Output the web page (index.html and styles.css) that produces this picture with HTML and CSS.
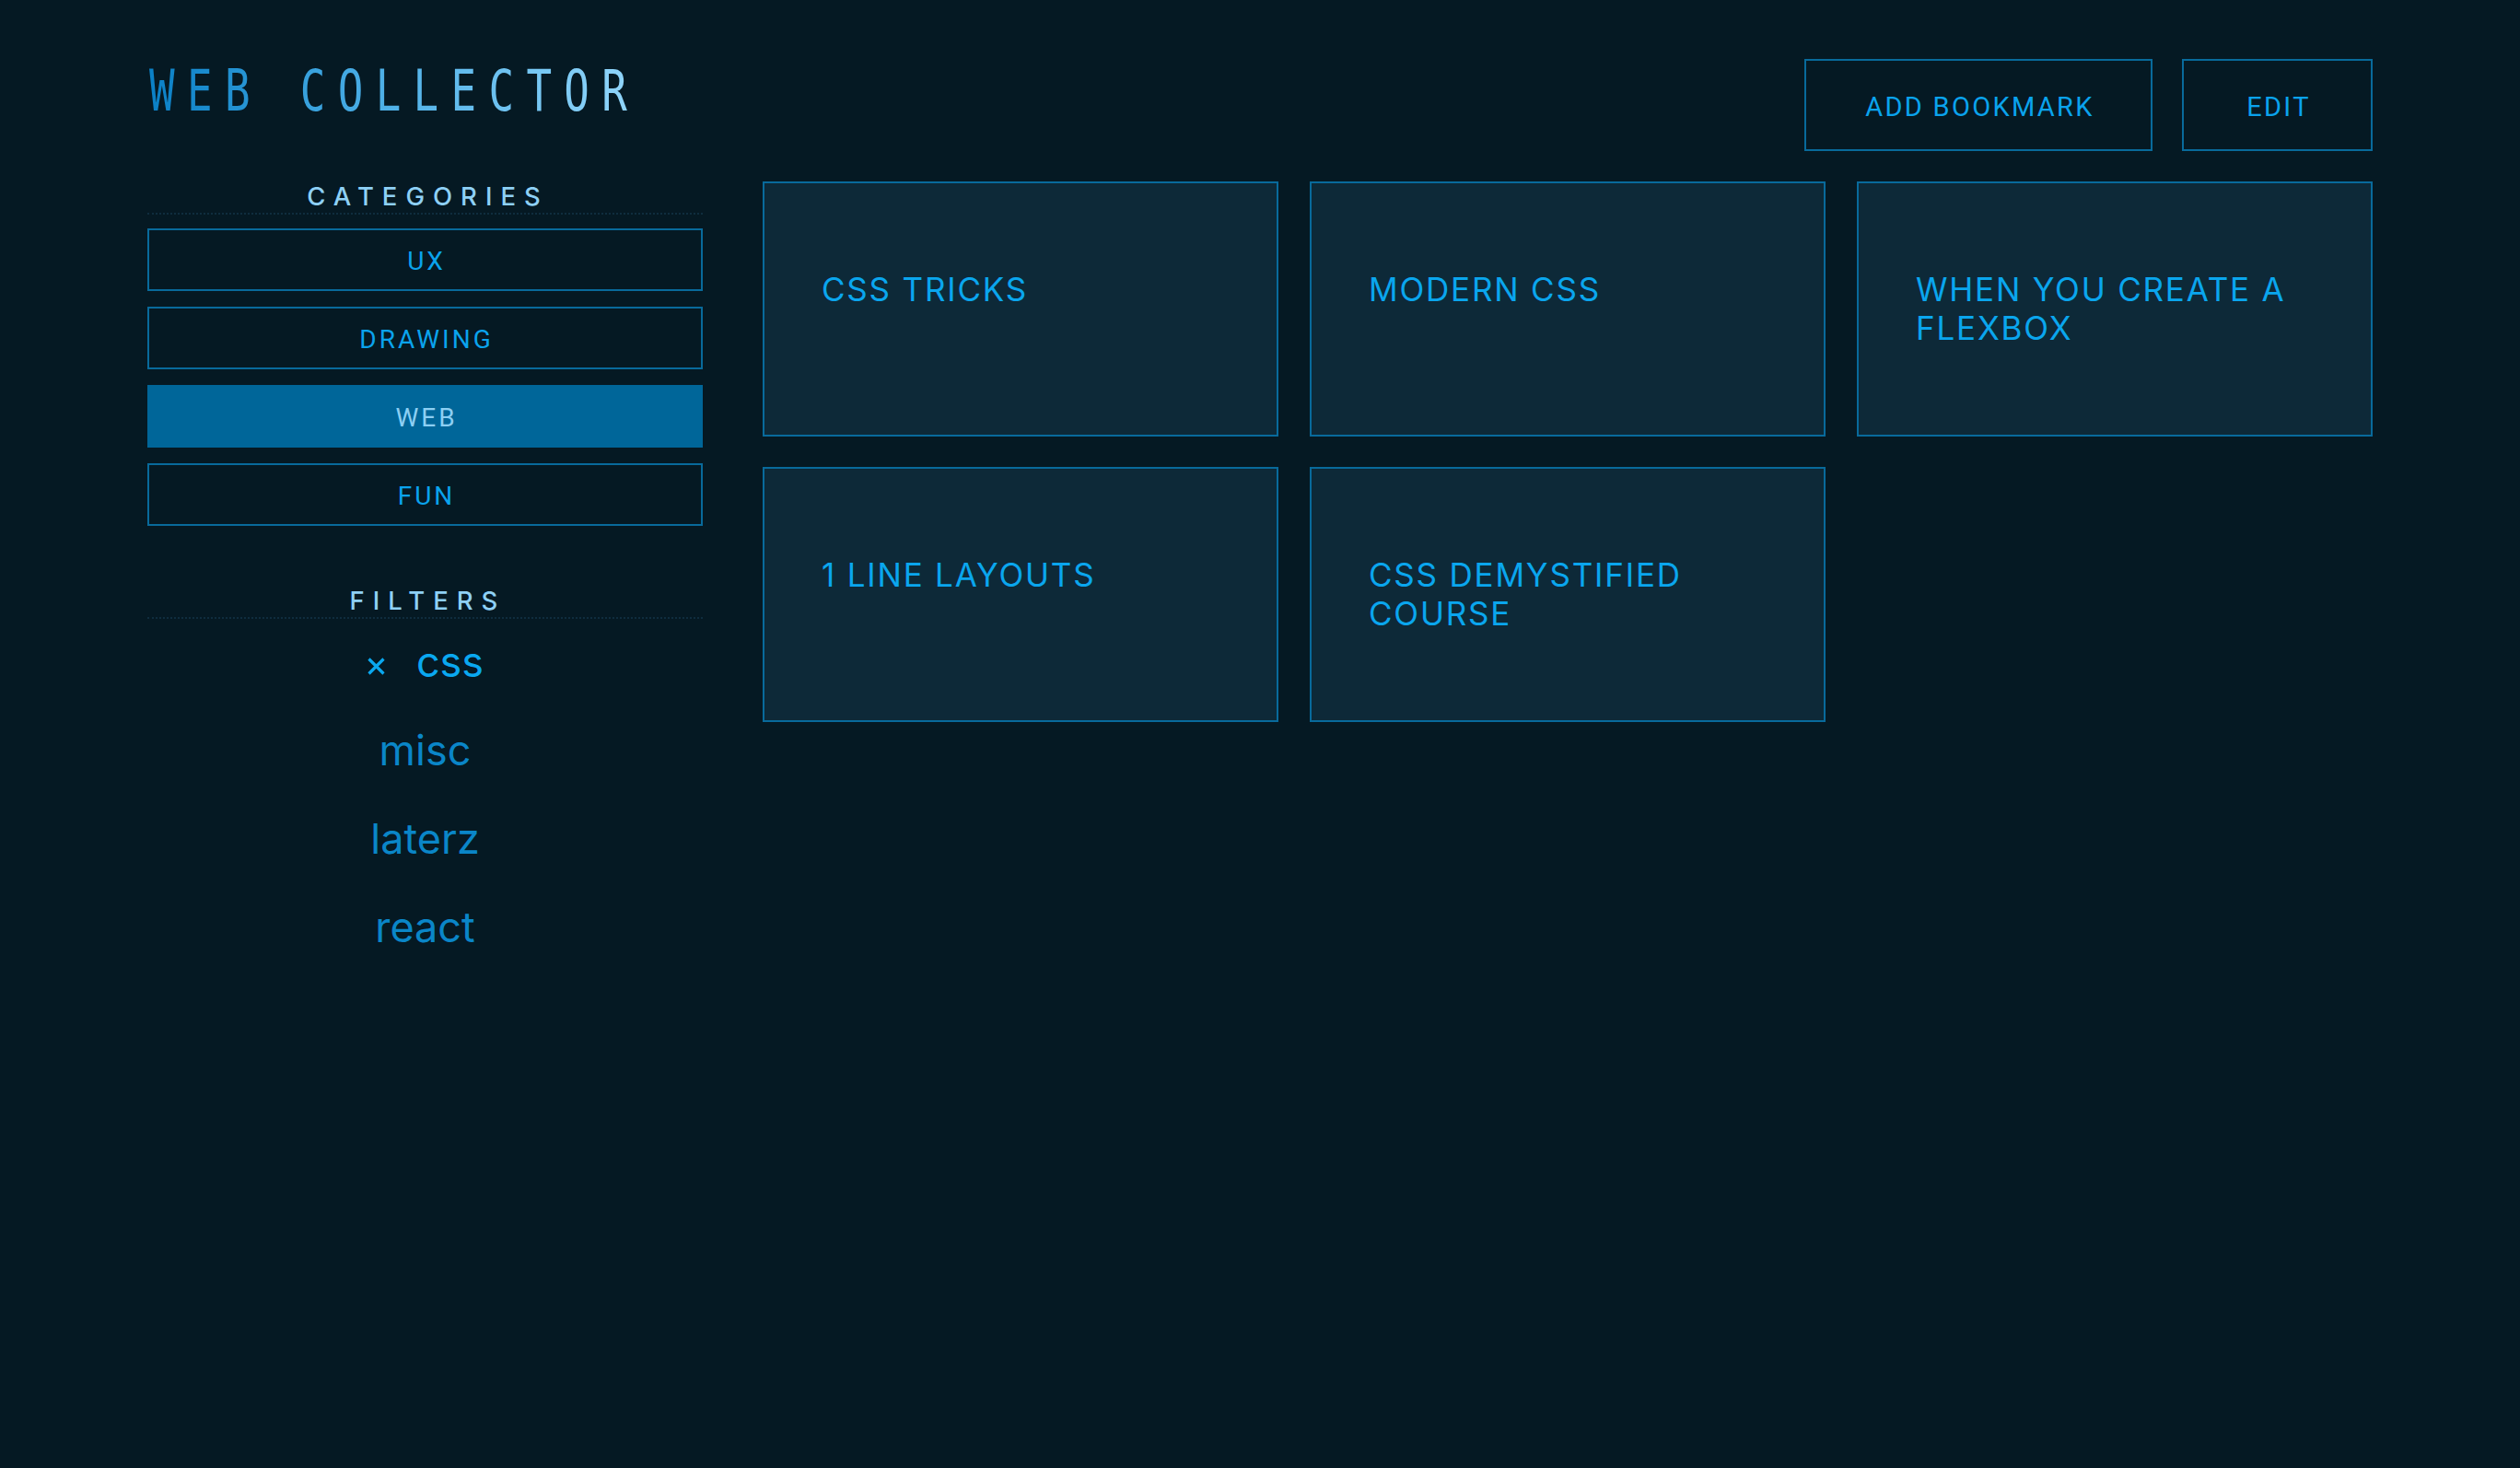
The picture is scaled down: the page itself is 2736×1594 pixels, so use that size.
FILE: index.html
```html
<!DOCTYPE html>
<html lang="en">
<head>
<meta charset="utf-8">
<title>Web Collector</title>
<link rel="stylesheet" href="styles.css">
</head>
<body>
<div class="page">
  <header class="topbar">
    <h1 class="logo">WEB COLLECTOR</h1>
    <div class="actions">
      <button class="btn btn-add">ADD BOOKMARK</button>
      <button class="btn btn-edit">EDIT</button>
    </div>
  </header>
  <main class="main">
    <aside class="sidebar">
      <h2 class="side-title">CATEGORIES</h2>
      <ul class="cat-list">
        <li class="cat">UX</li>
        <li class="cat">DRAWING</li>
        <li class="cat active">WEB</li>
        <li class="cat">FUN</li>
      </ul>
      <h2 class="side-title filters-title">FILTERS</h2>
      <ul class="filter-list">
        <li class="filter active"><svg class="x-icon" width="21" height="21" viewBox="0 0 21 21"><path d="M2.5 2.5 L18.5 18.5 M18.5 2.5 L2.5 18.5" stroke="#0aa8f0" stroke-width="3.2" fill="none"/></svg><span>css</span></li>
        <li class="filter">misc</li>
        <li class="filter">laterz</li>
        <li class="filter">react</li>
      </ul>
    </aside>
    <section class="grid">
      <div class="card">CSS TRICKS</div>
      <div class="card">MODERN CSS</div>
      <div class="card">WHEN YOU CREATE A FLEXBOX</div>
      <div class="card">1 LINE LAYOUTS</div>
      <div class="card">CSS DEMYSTIFIED COURSE</div>
    </section>
  </main>
</div>
</body>
</html>
```
FILE: styles.css
```css
html, body {
  margin: 0;
  background: #051923;
}
body {
  min-height: 100vh;
  font-family: Inter, "Noto Sans", sans-serif;
}
.page {
  padding: 64px 160px 0;
}
.topbar {
  display: flex;
  justify-content: space-between;
  align-items: flex-start;
}
.logo {
  margin: 4px 0 0 2px;
  font-family: "DejaVu Sans Mono", monospace;
  font-weight: normal;
  font-size: 62px;
  line-height: 62px;
  letter-spacing: 18px;
  white-space: nowrap;
  transform: scaleX(0.74);
  transform-origin: left top;
  background: linear-gradient(90deg, #0a80c6 0%, #4aaee6 45%, #92d6fb 100%);
  -webkit-background-clip: text;
  background-clip: text;
  color: transparent;
}
.actions {
  display: flex;
  gap: 32px;
}
.btn {
  height: 100px;
  box-sizing: border-box;
  padding: 3px 0 0 3px;
  border: 2px solid #086a9b;
  background: transparent;
  color: #0aa3ed;
  font-family: Roboto, "Liberation Sans", sans-serif;
  font-size: 29px;
  letter-spacing: 2.3px;
  display: flex;
  align-items: center;
  justify-content: center;
  cursor: pointer;
}
.btn-add {
  width: 378px;
}
.btn-edit {
  width: 207px;
}
.main {
  display: grid;
  grid-template-columns: 603px 1fr;
  column-gap: 65px;
  margin-top: 33px;
  align-items: start;
}
.side-title {
  margin: 1px 0 0;
  padding: 0 0 3px 6px;
  text-align: center;
  font-family: Inter, sans-serif;
  font-weight: 500;
  font-size: 27.5px;
  line-height: 30px;
  letter-spacing: 9px;
  color: #8ed0f5;
  border-bottom: 2px dotted #0f2d3e;
}
.cat-list {
  list-style: none;
  margin: 15px 0 0;
  padding: 0;
  display: flex;
  flex-direction: column;
  gap: 17px;
}
.cat {
  height: 68px;
  box-sizing: border-box;
  border: 2px solid #086a9b;
  display: flex;
  align-items: center;
  justify-content: center;
  padding: 2px 0 0 3px;
  font-family: Roboto, "Liberation Sans", sans-serif;
  font-size: 28px;
  letter-spacing: 3px;
  color: #0aa3ed;
}
.cat.active {
  background: #006699;
  border-color: #006699;
  color: #8ccff3;
}
.filters-title {
  margin-top: 66px;
}
.filter-list {
  list-style: none;
  margin: 2px 0 0;
  padding: 0;
  display: flex;
  flex-direction: column;
  gap: 6px;
}
.filter {
  height: 90px;
  line-height: 90px;
  display: flex;
  justify-content: center;
  align-items: center;
  font-family: Inter, sans-serif;
  font-size: 45px;
  color: #0a86c8;
}
.filter.active {
  color: #0aa8f0;
  gap: 33px;
}
.x-icon {
  display: block;
  margin-top: 8px;
}
.grid {
  display: grid;
  grid-template-columns: repeat(3, 1fr);
  grid-auto-rows: 277px;
  column-gap: 34px;
  row-gap: 33px;
}
.card {
  box-sizing: border-box;
  border: 2px solid #086a9b;
  background: #0d2938;
  padding: 94px 36px 0 62px;
  font-family: Inter, sans-serif;
  font-size: 35px;
  line-height: 42px;
  letter-spacing: 1.8px;
  color: #0aa6ee;
}
```
